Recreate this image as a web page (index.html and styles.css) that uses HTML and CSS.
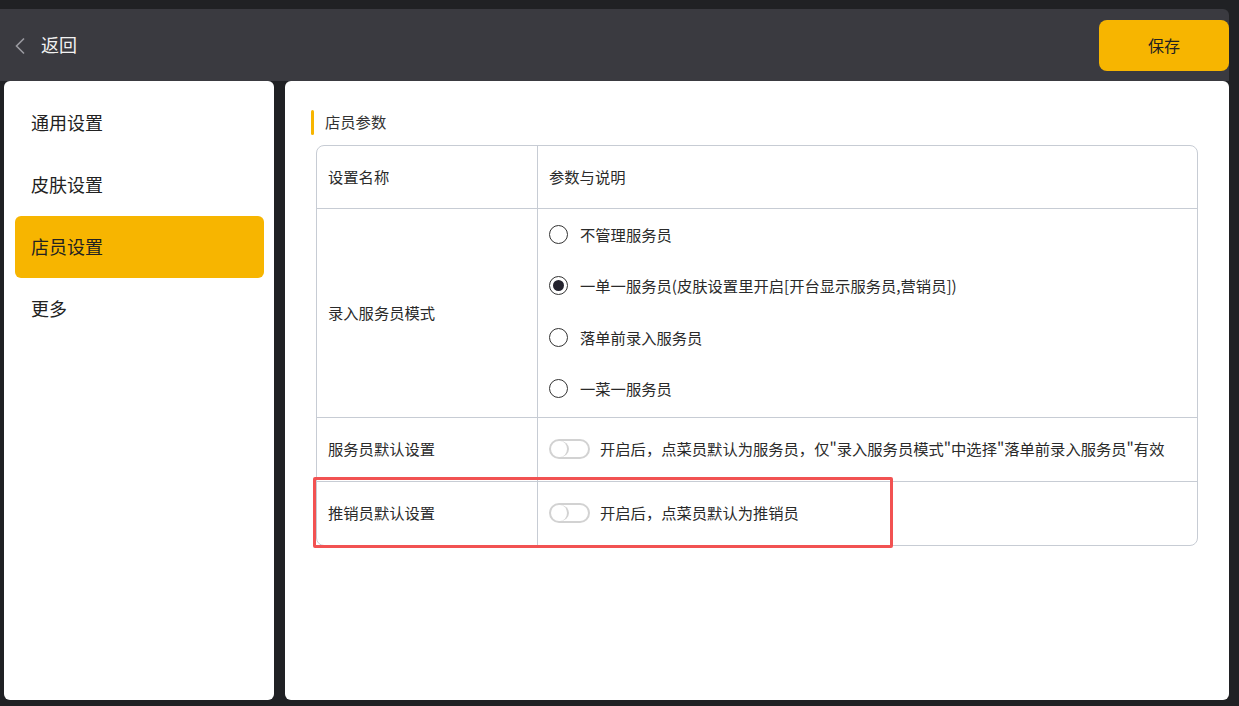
FILE: index.html
```html
<!DOCTYPE html>
<html lang="zh">
<head>
<meta charset="utf-8">
<link rel="stylesheet" href="styles.css">
</head>
<body>
<div class="screen">
  <header class="topbar">
    <div class="back">
      <svg class="chev" width="12" height="18" viewBox="0 0 12 18"><path d="M10 1.5 L2.5 9 L10 16.5" fill="none" stroke="#9a9aa0" stroke-width="1.6"/></svg>
      <span class="back-text">返回</span>
    </div>
    <button class="save">保存</button>
  </header>
  <main class="main">
    <nav class="side">
      <div class="nav-item">通用设置</div>
      <div class="nav-item">皮肤设置</div>
      <div class="nav-item active">店员设置</div>
      <div class="nav-item">更多</div>
    </nav>
    <section class="content">
      <div class="sec-title"><span class="bar"></span><span class="sec-text">店员参数</span></div>
      <div class="table-wrap">
        <div class="table">
          <div class="row head">
            <div class="c1">设置名称</div>
            <div class="c2">参数与说明</div>
          </div>
          <div class="row radios">
            <div class="c1">录入服务员模式</div>
            <div class="c2 opts">
              <div class="opt"><span class="radio"></span><span>不管理服务员</span></div>
              <div class="opt"><span class="radio on"></span><span>一单一服务员(皮肤设置里开启[开台显示服务员,营销员])</span></div>
              <div class="opt"><span class="radio"></span><span>落单前录入服务员</span></div>
              <div class="opt"><span class="radio"></span><span>一菜一服务员</span></div>
            </div>
          </div>
          <div class="row">
            <div class="c1">服务员默认设置</div>
            <div class="c2"><span class="toggle"></span><span>开启后，点菜员默认为服务员，仅"录入服务员模式"中选择"落单前录入服务员"有效</span></div>
          </div>
          <div class="row">
            <div class="c1">推销员默认设置</div>
            <div class="c2"><span class="toggle"></span><span>开启后，点菜员默认为推销员</span></div>
          </div>
        </div>
        <div class="highlight"></div>
      </div>
    </section>
  </main>
</div>
</body>
</html>
```
FILE: styles.css
```css
* { box-sizing: border-box; }
html, body { margin: 0; padding: 0; }
body {
  background: #202124;
  font-family: "Noto Sans CJK SC", "Noto Sans", sans-serif;
  color: #2a2a2a;
  width: 1239px;
  height: 706px;
  overflow: hidden;
}
.screen { padding-top: 9px; }
.topbar {
  height: 72px;
  margin-right: 10px;
  background: #3a3a40;
  border-top-right-radius: 6px;
  display: flex;
  align-items: center;
  justify-content: space-between;
  padding-left: 14px;
}
.back { display: flex; align-items: center; }
.chev { display: block; margin-top: 1px; }
.back-text {
  color: #f2f2f2;
  font-size: 18px;
  margin-left: 15px;
  padding-bottom: 2px;
}
.save {
  width: 130px;
  height: 51px;
  border: none;
  border-radius: 8px;
  background: #f7b500;
  color: #222;
  font-family: inherit;
  font-size: 16px;
  margin-top: 1px;
  padding-bottom: 2px;
}
.main {
  display: flex;
  gap: 11px;
  padding: 0 10px 0 4px;
  height: 619px;
}
.side {
  width: 270px;
  background: #fff;
  border-radius: 6px;
  padding: 11px 10px 0 11px;
}
.nav-item {
  height: 62px;
  display: flex;
  align-items: center;
  padding-left: 16px;
  padding-bottom: 3px;
  font-size: 18px;
  color: #222;
  border-radius: 6px;
}
.nav-item.active { background: #f7b500; }
.content {
  flex: 1;
  background: #fff;
  border-radius: 6px;
  padding: 29px 31px 0 26px;
}
.sec-title {
  display: flex;
  align-items: center;
  height: 25px;
  font-size: 15.3px;
  color: #333;
}
.sec-text { padding-bottom: 3px; }
.bar {
  width: 3px;
  height: 25px;
  background: #f7b500;
  border-radius: 2px;
  margin-right: 11px;
}
.table-wrap {
  position: relative;
  margin-top: 10px;
  margin-left: 5px;
}
.table {
  border: 1px solid #c7ccd4;
  border-radius: 8px;
  font-size: 15.3px;
  color: #2a2a2a;
}
.row {
  display: flex;
  height: 64px;
  border-top: 1px solid #c7ccd4;
}
.row.head { border-top: none; height: 62px; }
.row.radios { height: 209px; }
.c1 {
  width: 221px;
  border-right: 1px solid #c7ccd4;
  display: flex;
  align-items: center;
  padding-left: 11px;
  padding-bottom: 3px;
}
.c2 {
  flex: 1;
  display: flex;
  align-items: center;
  padding-left: 11px;
  padding-bottom: 3px;
}
.opts {
  flex-direction: column;
  align-items: stretch;
  justify-content: center;
}
.opt {
  height: 52px;
  display: flex;
  align-items: center;
}
.opt > span:last-child { padding-bottom: 1px; }
.radio {
  width: 19px;
  height: 19px;
  border: 1.5px solid #333;
  border-radius: 50%;
  margin-right: 12px;
  display: flex;
  align-items: center;
  justify-content: center;
  flex: none;
}
.radio.on::after {
  content: "";
  width: 11px;
  height: 11px;
  border-radius: 50%;
  background: #24232e;
}
.toggle {
  width: 41px;
  height: 20px;
  border: 2px solid #d2d2d2;
  border-radius: 10px;
  margin-right: 10px;
  margin-top: 2px;
  position: relative;
  flex: none;
}
.toggle::before {
  content: "";
  position: absolute;
  left: 0;
  top: 0;
  width: 16px;
  height: 16px;
  border-radius: 50%;
  border-right: 2px solid #d2d2d2;
}
.highlight {
  position: absolute;
  left: -3px;
  top: 332px;
  width: 580px;
  height: 71px;
  border: 3px solid #f25252;
  border-radius: 2px;
}
```
